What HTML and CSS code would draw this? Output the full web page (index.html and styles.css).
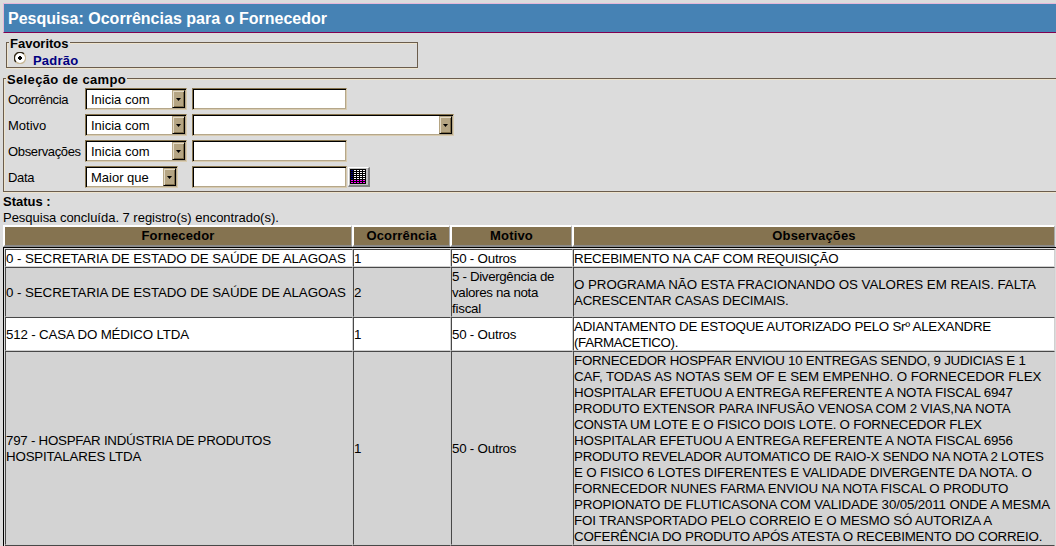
FILE: index.html
```
<!DOCTYPE html>
<html lang="pt-BR">
<head>
<meta charset="utf-8">
<title>Pesquisa: Ocorrências para o Fornecedor</title>
<link rel="stylesheet" href="styles.css">
</head>
<body>
<h1 class="title"><span>Pesquisa: Ocorrências para o Fornecedor</span></h1>
<section class="group favorites">
  <div class="legend legend-favorites"><span>Favoritos</span></div>
  <div class="favorite">
    <svg class="radio" width="12" height="12" viewBox="0 0 12 12"><circle cx="6" cy="6" r="5" fill="#fff"/><path d="M2 10A5.5 5.5 0 0 1 10 2" fill="none" stroke="#302818" stroke-width="1.4"/><path d="M10 2A5.5 5.5 0 0 1 2 10" fill="none" stroke="#c8b896" stroke-width="1.2"/><path d="M5 4h2v1h1v2H7v1H5V7H4V5h1z" fill="#000"/></svg>
    <span class="default-name">Padrão</span>
  </div>
</section>
<section class="group fields">
  <div class="legend"><span>Seleção de campo</span></div>
  <div class="row"><label class="tight">Ocorrência</label><div class="box select"><span>Inicia com</span><i class="arrow"></i></div><div class="box input"></div></div>
  <div class="row"><label>Motivo</label><div class="box select"><span>Inicia com</span><i class="arrow"></i></div><div class="box select wide"><i class="arrow"></i></div></div>
  <div class="row"><label class="tight">Observações</label><div class="box select"><span>Inicia com</span><i class="arrow"></i></div><div class="box input"></div></div>
  <div class="row"><label class="tight">Data</label><div class="box select short"><span>Maior que</span><i class="arrow"></i></div><div class="box input"></div>
    <div class="calendar"><svg width="16" height="15" viewBox="0 0 16 15" shape-rendering="crispEdges"><path fill="#000" d="M0 0h16v15H0z"/><path fill="#000080" d="M1 1h2v1H1zM1 3h2v1H1zM1 5h2v1H1zM1 7h2v1H1zM1 9h2v1H1z"/><g fill="#fff"><path d="M4 1h2v1H4zM7 1h2v1H7zM10 1h2v1h-2zM13 1h2v1h-2z"/><path d="M4 3h2v1H4zM7 3h2v1H7zM10 3h2v1h-2zM13 3h2v1h-2z"/><path d="M4 5h2v1H4zM7 5h2v1H7zM10 5h2v1h-2zM13 5h2v1h-2z"/><path d="M4 7h2v1H4zM7 7h2v1H7zM10 7h2v1h-2zM13 7h2v1h-2z"/><path d="M4 9h2v1H4zM7 9h2v1H7zM10 9h2v1h-2zM13 9h2v1h-2z"/></g><g fill="#f0f"><path d="M1 11h2v1H1zM4 11h2v1H4zM7 11h2v1H7zM10 11h2v1h-2zM13 11h2v1h-2z"/><path d="M1 13h2v1H1zM4 13h2v1H4zM7 13h2v1H7zM10 13h2v1h-2zM13 13h2v1h-2z"/></g></svg></div>
  </div>
</section>
<div class="status"><b>Status :</b><p>Pesquisa concluída. 7 registro(s) encontrado(s).</p></div>
<div class="head"><div><span>Fornecedor</span></div><div><span>Ocorrência</span></div><div><span>Motivo</span></div><div><span>Observações</span></div></div>
<div class="results">
<table class="grid">
<colgroup><col class="c1"><col class="c2"><col class="c3"><col class="c4"></colgroup>
<tbody>
<tr><td><span class="k1">0 - SECRETARIA DE ESTADO DE SAÚDE DE ALAGOAS</span></td><td><span>1</span></td><td><span class="k4">50 - Outros</span></td><td><span class="k4">RECEBIMENTO NA CAF COM REQUISIÇÃO</span></td></tr>
<tr><td><span class="k1">0 - SECRETARIA DE ESTADO DE SAÚDE DE ALAGOAS</span></td><td><span>2</span></td><td><span class="k6">5 - Divergência de</span><br><span class="k6">valores na nota</span><br><span class="k4">fiscal</span></td><td><span>O PROGRAMA NÃO ESTA FRACIONANDO OS VALORES EM REAIS. FALTA</span><br><span class="k4">ACRESCENTAR CASAS DECIMAIS.</span></td></tr>
<tr><td><span class="k3">512 - CASA DO MÉDICO LTDA</span></td><td><span>1</span></td><td><span class="k4">50 - Outros</span></td><td><span class="k5">ADIANTAMENTO DE ESTOQUE AUTORIZADO PELO Srº ALEXANDRE</span><br><span class="k6">(FARMACETICO).</span></td></tr>
<tr><td><span class="k5">797 - HOSPFAR INDÚSTRIA DE PRODUTOS</span><br><span class="k3">HOSPITALARES LTDA</span></td><td><span>1</span></td><td><span class="k4">50 - Outros</span></td><td><span class="k5">FORNECEDOR HOSPFAR ENVIOU 10 ENTREGAS SENDO, 9 JUDICIAS E 1</span><br><span class="k1">CAF, TODAS AS NOTAS SEM OF E SEM EMPENHO. O FORNECEDOR FLEX</span><br><span class="k2">HOSPITALAR EFETUOU A ENTREGA REFERENTE A NOTA FISCAL 6947</span><br><span class="k2">PRODUTO EXTENSOR PARA INFUSÃO VENOSA COM 2 VIAS,NA NOTA</span><br><span class="k4">CONSTA UM LOTE E O FISICO DOIS LOTE. O FORNECEDOR FLEX</span><br><span class="k2">HOSPITALAR EFETUOU A ENTREGA REFERENTE A NOTA FISCAL 6956</span><br><span class="k5">PRODUTO REVELADOR AUTOMATICO DE RAIO-X SENDO NA NOTA 2 LOTES</span><br><span class="k3">E O FISICO 6 LOTES DIFERENTES E VALIDADE DIVERGENTE DA NOTA. O</span><br><span class="k3">FORNECEDOR NUNES FARMA ENVIOU NA NOTA FISCAL O PRODUTO</span><br><span class="k2">PROPIONATO DE FLUTICASONA COM VALIDADE 30/05/2011 ONDE A MESMA</span><br><span class="k2">FOI TRANSPORTADO PELO CORREIO E O MESMO SÓ AUTORIZA A</span><br><span class="k4">COFERÊNCIA DO PRODUTO APÓS ATESTA O RECEBIMENTO DO CORREIO.</span></td></tr>
<tr><td>&nbsp;</td><td></td><td></td><td></td></tr>
</tbody>
</table>
</div>
</body>
</html>
```
FILE: styles.css
```
* { box-sizing: border-box; }
html { background: #dcdcdc; overflow: hidden; }
body { margin: 0; padding: 3px 0 0 3px; height: 546px; overflow: hidden; background: #dcdcdc; color: #000; font: 14px/16px "Liberation Sans", Arial, sans-serif; white-space: nowrap; }
.title { margin: 0; height: 30px; padding-left: 4px; border: solid; border-width: 1px 0 1px 1px; border-color: #e6b8d8 #800050 #800050 #e6b8d8; background: #4682b4; color: #fff; font-size: 16px; line-height: 29px; font-weight: bold; letter-spacing: .02px; }
.group { border: 1px solid #6b5d4d; box-shadow: 0 1px #eee4ce, inset 1px 1px #eee4ce; }
.legend { width: max-content; height: 16px; margin: -8px 0 0 2px; padding: 0 1px; background: #dcdcdc; font-size: 13px; line-height: 18px; font-weight: bold; letter-spacing: .35px; }
.legend-favorites { letter-spacing: 0; margin-left: 2px; }
.favorites { width: 412px; height: 26px; margin: 9px 0 0 3px; }
.favorite { display: flex; height: 16px; padding-left: 7px; }
.radio { margin-top: 1px; }
.default-name { margin-left: 7px; font-size: 13px; line-height: 20px; font-weight: bold; color: #000080; letter-spacing: .2px; }
.fields { width: 1060px; height: 114px; margin-top: 10px; }
.row { display: flex; height: 26px; padding: 1px 0 0 4px; }
.row label { width: 77px; font-size: 13px; line-height: 24px; }
.row .tight { letter-spacing: -.35px; }
.box { height: 22px; width: 155px; background: #fff; border: 1px solid; border-color: #86744f #d8cbb0 #d8cbb0 #86744f; box-shadow: inset 1px 1px #000, inset -1px -1px #b5a78a; }
.select { display: flex; justify-content: space-between; width: 102px; padding: 1px 1px 1px 5px; margin-right: 5px; font-size: 13px; line-height: 19px; letter-spacing: 0; }
.short { width: 93px; margin-right: 14px; }
.wide { width: 262px; justify-content: flex-end; }
.arrow { width: 13px; height: 18px; background: #b5a583; border: 1px solid; border-color: #b5a583 #000 #000 #b5a583; box-shadow: inset 1px 1px #e2d9c5, inset -1px -1px #806f4b; }
.arrow::before { content: ""; display: block; width: 5px; height: 3px; margin: 7px 0 0 3px; background: #000; clip-path: polygon(0 0, 100% 0, 50% 100%); }
.calendar { width: 22px; height: 20px; margin: 1px 0 0 1px; padding: 1px 0 0 1px; line-height: 0; background: #c0c0c0; border: solid; border-width: 1px 2px 2px 1px; border-color: #fff #808080 #808080 #fff; }
.status { padding-top: 2px; height: 33px; font-size: 13px; }
.status b { display: block; }
.status p { margin: 0; letter-spacing: -.02px; }
.head { display: grid; grid-template-columns: 349px 98px 122px 483px; height: 22px; width: 1052px; font-size: 13px; font-weight: bold; line-height: 18px; text-align: center; letter-spacing: .15px; }
.head div { background: #857350; border: solid; border-width: 2px 1px 2px 2px; border-color: #fff #a8a8a8 #8a8a8a #fff; }
.results { border: solid; border-width: 1px 0 0 1px; border-color: #000; padding: 1px 0 0 1px; height: 300px; overflow: hidden; }
.grid { table-layout: fixed; width: 1050px; border-collapse: separate; border-spacing: 0; font-size: 13.33px; line-height: 16px; letter-spacing: -.05px; }
.c1 { width: 348px; } .c2 { width: 98px; } .c3 { width: 122px; } .c4 { width: 482px; }
.grid td { padding: 0; height: 18px; border: 1px solid; border-color: #484848 #d0d0d0 #d0d0d0 #484848; background: #fff; vertical-align: middle; }
.grid tr:nth-child(even) td { background: #d3d3d3; }
.grid span { line-height: 14px; vertical-align: -1px; }
.k1 { letter-spacing: -.075px; }
.k2 { letter-spacing: -.145px; }
.k3 { letter-spacing: -.17px; }
.k4 { letter-spacing: -.22px; }
.k5 { letter-spacing: -.255px; }
.k6 { letter-spacing: -.34px; }
```
